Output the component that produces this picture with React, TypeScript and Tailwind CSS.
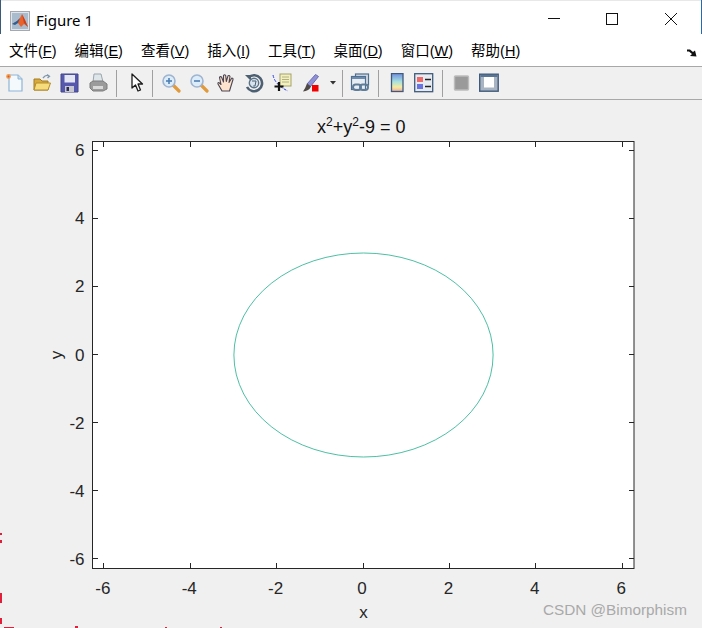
const menus = [
  ["文件(", "F", ")"],
  ["编辑(", "E", ")"],
  ["查看(", "V", ")"],
  ["插入(", "I", ")"],
  ["工具(", "T", ")"],
  ["桌面(", "D", ")"],
  ["窗口(", "W", ")"],
  ["帮助(", "H", ")"],
];

const sx = (v: number) => 363 + v * 43.2;
const sy = (v: number) => 354.5 - v * 34.08;
const ticks = [-6, -4, -2, 0, 2, 4, 6];

function Icon({ className, children }: { className: string; children: React.ReactNode }) {
  return (
    <svg width="20" height="20" viewBox="0 0 20 20" className={`shrink-0 ${className}`}>
      {children}
    </svg>
  );
}

function Sep({ className }: { className: string }) {
  return <div className={`w-px h-[27px] shrink-0 bg-[#a0a0a0] ${className}`} />;
}

function Magnifier({ minus }: { minus?: boolean }) {
  return (
    <>
      <path d="M12 12 L18 18" stroke="#e09a3c" strokeWidth="3.2" strokeLinecap="round" />
      <circle cx="8" cy="8" r="6" fill="#dcecf8" stroke="#9fb4d0" strokeWidth="1.6" />
      <path d="M5 8 H11" stroke="#4f7fb4" strokeWidth="1.6" />
      {!minus && <path d="M8 5 V11" stroke="#4f7fb4" strokeWidth="1.6" />}
    </>
  );
}

function Toolbar() {
  return (
    <div className="h-[33px] flex items-center bg-[#f0f0f0] border-b border-[#a8a8a8] pl-[5px]">
      {/* new */}
      <Icon className="">
        <path d="M4 2 H13 L17 6 V18 H4 Z" fill="#f4f9fd" stroke="#8fb4d6" strokeWidth="1.2" />
        <path d="M13 2 V6 H17" fill="#c9dff0" stroke="#8fb4d6" />
        <circle cx="3.5" cy="3.5" r="2.4" fill="#f0a050" />
        <circle cx="3.5" cy="3.5" r="1" fill="#e8502a" />
      </Icon>
      {/* open */}
      <Icon className="ml-[7px]">
        <path d="M2 6 H8 L10 8 H16 V17 H2 Z" fill="#d8a93c" stroke="#a27d25" />
        <path d="M2 17 L4 10 H18.5 L16 17 Z" fill="#f6dc7c" stroke="#b48c2c" />
        <path d="M11 5 Q14 1 17 3 M15 1.5 L17.5 3.2 L15.5 5" fill="none" stroke="#7f97ad" strokeWidth="1.3" />
      </Icon>
      {/* save */}
      <Icon className="ml-[8px]">
        <path d="M1 1 H18 V19 H1 Z" fill="#5558ac" stroke="#43468c" />
        <rect x="4.5" y="2" width="10.5" height="7.5" fill="#e4e6f4" />
        <rect x="5" y="13" width="9" height="6" fill="#c8c8d2" />
        <rect x="6.5" y="14" width="2.5" height="4" fill="#2b2b55" />
      </Icon>
      {/* print */}
      <Icon className="ml-[8px]">
        <path d="M6 1 H13 L15 9 H5 Z" fill="#dfe6ea" stroke="#9aa5ac" />
        <path d="M2 10 L5 8 H15 L19 11 V16 L15 18 H5 L2 15 Z" fill="#9b9b9b" stroke="#7d7d7d" />
        <rect x="5" y="13" width="10" height="3" fill="#d9d9d9" />
      </Icon>
      <Sep className="ml-[8px]" />
      {/* pointer */}
      <Icon className="ml-[10px]">
        <path d="M5 1 V15 L8.5 12 L11 18 L13.5 17 L11 11 H15.5 Z" fill="#fff" stroke="#1c1c1c" strokeWidth="1.3" strokeLinejoin="round" />
      </Icon>
      <Sep className="ml-[5px]" />
      <Icon className="ml-[8px]">
        <Magnifier />
      </Icon>
      <Icon className="ml-[8px]">
        <Magnifier minus />
      </Icon>
      {/* hand */}
      <Icon className="ml-[7px]">
        <path
          d="M6 18 L2 11 Q1.5 9 3.5 10 L5 11.5 L3.5 4.5 Q4 3 5.5 4 L7.5 9 L7.5 2.5 Q8.5 1 9.7 2.5 L10.3 8.5 L12 2.8 Q13.3 2 14 3.5 L13 9.5 L15.8 5 Q17.2 5 17 6.5 L15 13 L13.5 18 Z"
          fill="#fbe3cd"
          stroke="#4c4550"
          strokeWidth="1.1"
          strokeLinejoin="round"
        />
      </Icon>
      {/* rotate */}
      <Icon className="ml-[8px]">
        <path d="M4.5 4.5 A8 8 0 1 1 3 14" fill="none" stroke="#4d6072" strokeWidth="2.6" />
        <path d="M1 2 H7 V8 Z" fill="#4d6072" />
        <circle cx="10" cy="10" r="4.7" fill="#d8e4ee" stroke="#5c7286" strokeWidth="1.4" />
        <path d="M8 8 H12 L11 13 H9.2" fill="none" stroke="#4d6072" />
      </Icon>
      {/* data cursor */}
      <Icon className="ml-[8px]">
        <path d="M1 2 Q3 12 16 18" fill="none" stroke="#2b3fe0" strokeWidth="1" strokeDasharray="3 1.5" />
        <rect x="8" y="1" width="11" height="12" fill="#f3efc5" stroke="#a4a260" />
        <path d="M10 4 H17 M10 6.5 H17 M10 9 H17" stroke="#b4b27a" />
        <path d="M7 9 V18 M2.5 13.5 H11.5" stroke="#111" strokeWidth="2.2" />
      </Icon>
      {/* brush */}
      <Icon className="ml-[8px]">
        <path d="M7 11 L15.5 1.5 L18.5 3.5 L10.5 13.5 Z" fill="#8f90d6" stroke="#6d6db0" />
        <path d="M7 10.5 L11 13.5 Q9 18 3 18.5 Q5.5 15 7 10.5 Z" fill="#4f4a45" />
        <rect x="12" y="12" width="6.5" height="6.5" fill="#f00000" />
      </Icon>
      <svg width="6" height="4" viewBox="0 0 6 4" className="shrink-0 ml-[10px]">
        <path d="M0 0 H6 L3 3.5 Z" fill="#333" />
      </svg>
      <Sep className="ml-[6px]" />
      {/* link */}
      <Icon className="ml-[7px]">
        <rect x="5.5" y="1" width="13" height="11" fill="#d5dce6" stroke="#4f6f92" strokeWidth="1.2" />
        <rect x="1.5" y="3.5" width="14" height="13" fill="#e8edf3" stroke="#4f6f92" strokeWidth="1.2" />
        <rect x="2" y="4" width="13" height="2" fill="#6d8cad" />
        <rect x="3" y="11.5" width="8" height="5.5" rx="2.7" fill="none" stroke="#5f7c98" strokeWidth="2" />
        <rect x="10" y="11.5" width="8" height="5.5" rx="2.7" fill="none" stroke="#5f7c98" strokeWidth="2" />
      </Icon>
      <Sep className="ml-[8px]" />
      {/* colorbar */}
      <Icon className="ml-[8px]">
        <defs>
          <linearGradient id="cb" x1="0" y1="0" x2="0" y2="1">
            <stop offset="0" stopColor="#6f8ee0" />
            <stop offset="0.45" stopColor="#a6e0e0" />
            <stop offset="0.75" stopColor="#f4eca0" />
            <stop offset="1" stopColor="#f0a8a0" />
          </linearGradient>
        </defs>
        <rect x="4.5" y="0.5" width="11.5" height="18" fill="url(#cb)" stroke="#3f5a7c" strokeWidth="1.3" />
      </Icon>
      {/* legend */}
      <Icon className="ml-[7px]">
        <rect x="0.7" y="0.7" width="18" height="18" fill="#e6ebf2" stroke="#3f5a7c" strokeWidth="1.3" />
        <rect x="3" y="4" width="6" height="5" fill="#ee6a6a" />
        <rect x="3" y="11" width="6" height="5" fill="#6a73e0" />
        <path d="M11 6.5 H17 M11 13.5 H17" stroke="#222" strokeWidth="1.4" />
      </Icon>
      <Sep className="ml-[8px]" />
      {/* gray box */}
      <Icon className="ml-[8px]">
        <rect x="3.5" y="3" width="14" height="14" rx="1" fill="#9a9a9a" stroke="#bcbcbc" strokeWidth="1.4" />
      </Icon>
      {/* window */}
      <Icon className="ml-[8px]">
        <rect x="0.7" y="1.2" width="18.5" height="17" fill="#a9b4c2" stroke="#3f5a7c" strokeWidth="1.4" />
        <rect x="1.5" y="2" width="17" height="2" fill="#5a7494" />
        <rect x="5" y="4" width="10" height="10.5" fill="#fff" />
      </Icon>
    </div>
  );
}

function Plot() {
  return (
    <svg viewBox="0 100 702 528" className="block w-[702px] h-[528px]" fontFamily="'Liberation Sans', sans-serif">
      <rect x="92.5" y="141.5" width="541.5" height="427" fill="#fff" stroke="#262626" strokeWidth="1" />
      {ticks.map((t) => (
        <g key={t}>
          <path
            d={`M${sx(t)} 568 v-5 M${sx(t)} 141.5 v5 M92.5 ${sy(t)} h5 M634 ${sy(t)} h-5`}
            stroke="#262626"
            strokeWidth="1"
            shapeRendering="crispEdges"
          />
          <text x={sx(t) - 1} y="594" fontSize="17" fill="#262626" textAnchor="middle">
            {t}
          </text>
          <text x="84.5" y={sy(t) + 6} fontSize="17" fill="#262626" textAnchor="end">
            {t}
          </text>
        </g>
      ))}
      <ellipse cx="363.5" cy="355" rx="129.6" ry="102" fill="none" stroke="#1fae8c" strokeWidth="0.8" />
      <text x="317" y="133" fontSize="18" fill="#111">
        x<tspan fontSize="12" dy="-7">2</tspan>
        <tspan dy="7">+y</tspan>
        <tspan fontSize="12" dy="-7">2</tspan>
        <tspan dy="7">-9 = 0</tspan>
      </text>
      <text x="363.5" y="618" fontSize="17" fill="#262626" textAnchor="middle">
        x
      </text>
      <text x="0" y="0" fontSize="17" fill="#262626" textAnchor="middle" transform="translate(62 355) rotate(-90)">
        y
      </text>
      {/* stray coloured pixels along the screenshot edge */}
      <path d="M0 533 h2 v2 h-2 Z M0 540 h2 v3 h-2 Z M0 593 h2 v10 h-2 Z M0 618 h2 v6 h-2 Z M4 627 h10 v1 h-10 Z M75 626 h3 v2 h-3 Z M165 627 h2 v1 h-2 Z M220 627 h2 v1 h-2 Z" fill="#e0203a" />
    </svg>
  );
}

export default function App() {
  return (
    <div className="relative w-[702px] h-[628px] overflow-hidden bg-[#f0f0f0] font-['Liberation_Sans',sans-serif] text-black">
      <div className="h-10 bg-white border-t border-[#e8e8e8] flex items-center">
        <svg width="20" height="20" viewBox="0 0 20 20" className="ml-[10px] shrink-0">
          <rect x="0.5" y="0.5" width="19" height="19" fill="#dfe5ea" stroke="#a3a9ae" />
          <rect x="2" y="2" width="16" height="16" fill="#a9bccd" />
          <path d="M2 13 L7 10 L10 7 L12 3 L15 9 L18 16 L14 13 L11 16 L8 12 Z" fill="#e8622a" />
          <path d="M2 13 L7 10 L10 7 L8 12 L5 14 Z" fill="#2d5f96" />
          <path d="M12 3 L15 9 L18 16 L14 12 Z" fill="#c9401f" />
        </svg>
        <span className="ml-[6px] text-[15px] font-['Noto_Sans',sans-serif]">Figure 1</span>
        {/* window buttons */}
        <svg width="12" height="1" viewBox="0 0 12 1" className="ml-auto mt-[-4px] shrink-0">
          <rect width="12" height="1" fill="#111" />
        </svg>
        <svg width="12" height="12" viewBox="0 0 12 12" className="ml-[46px] mt-[-3px] shrink-0">
          <rect x="0.5" y="0.5" width="11" height="11" fill="none" stroke="#111" />
        </svg>
        <svg width="12" height="12" viewBox="0 0 12 12" className="ml-[47px] mr-[25px] mt-[-3px] shrink-0">
          <path d="M0 0 L12 12 M12 0 L0 12" stroke="#111" strokeWidth="1" />
        </svg>
      </div>

      <div className="h-[27px] bg-white border-b border-[#a8a8a8] flex items-center pl-[9px] gap-[18px] pb-[2px] text-[14.5px] font-['Liberation_Sans','Noto_Sans_CJK_SC',sans-serif]">
        {menus.map(([a, k, b]) => (
          <span key={k} className="whitespace-nowrap">
            {a}
            <span className="underline">{k}</span>
            {b}
          </span>
        ))}
        <svg width="10" height="8" viewBox="0 0 10 8" className="absolute left-[687px] top-[49px]">
          <path d="M0 0.5 L3 0.5 L6 3 L8 1.5 L9.5 7.5 L3 7 L5 5 L2 2.5 L0 2.5 Z" fill="#111" />
        </svg>
      </div>

      <Toolbar />
      <Plot />

      <span className="absolute left-[543px] top-[601px] text-[15.3px] leading-[18px] text-[#a9a9a9] whitespace-nowrap">
        CSDN @Bimorphism
      </span>
      {/* window frame edges peeking through */}
      <div className="absolute left-0 top-0 w-px h-[34px] bg-[#3c5a78]" />
      <div className="absolute right-0 top-0 w-px h-[34px] bg-[#2a6aa8]" />
    </div>
  );
}
